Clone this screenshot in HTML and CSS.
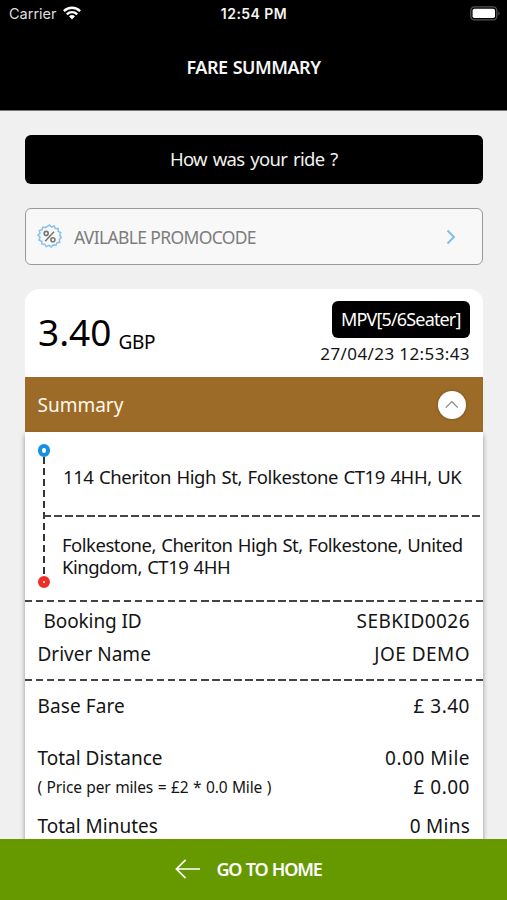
FILE: index.html
```html
<!DOCTYPE html>
<html lang="en">
<head>
<meta charset="utf-8">
<title>Fare Summary</title>
<link rel="stylesheet" href="styles.css">
</head>
<body>
<div class="app">
  <header class="header">
    <div class="status">
      <div class="carrier"><span>Carrier</span>
        <svg width="18" height="14" viewBox="0 0 18 14"><g fill="none" stroke="#fff" stroke-width="2.4"><path d="M.9 5.1a11.6 11.6 0 0 1 16.2 0"/><path d="M3.8 8.3a7.4 7.4 0 0 1 10.4 0"/></g><path d="M6 10.3a4.4 4.4 0 0 1 6 0L9 13.5z" fill="#fff"/></svg>
      </div>
      <span class="time">12:54 PM</span>
      <svg class="battery" width="31" height="15" viewBox="0 0 31 15"><rect x=".8" y=".9" width="26" height="13" rx="3.6" fill="none" stroke="#555" stroke-width="1.3"/><rect x="2.6" y="2.7" width="22.4" height="9.4" rx="1.8" fill="#fff"/><path d="M28.5 5.2q2 2.3 0 4.6z" fill="#666"/></svg>
    </div>
    <h1>FARE SUMMARY</h1>
  </header>
  <main class="content">
    <div class="ride">How was your ride ?</div>
    <div class="promo">
      <svg width="25" height="25" viewBox="0 0 25 25"><path class="seal" d="M12.5 1 14.5 3 17.2 1.9 18.3 4.4 21.2 4.5 21.2 7.3 23.7 8.7 22.6 11.3 24.3 13.5 22.3 15.4 22.7 18.3 20 18.8 18.9 21.5 16.2 20.9 14.1 23.1 12 21.4 9.2 22.6 7.7 20.2 4.9 20.1 4.8 17.2 2.1 16 3 13.3 1 11.2 3 9.3 2.3 6.5 5 5.8 5.9 3.1 8.6 3.6z"/><path class="pct" d="M17 7.8 8.2 17.2"/><circle class="pct" cx="9.2" cy="9.4" r="2"/><circle class="pct" cx="15.9" cy="15.7" r="2"/></svg>
      <span>AVILABLE PROMOCODE</span>
      <svg width="10" height="16" viewBox="0 0 10 16"><path d="m1.5 1.5 6.4 6.5-6.4 6.5" fill="none" stroke="#7fbff0" stroke-width="2"/></svg>
    </div>
    <section class="fare">
      <div class="top">
        <div class="price"><span class="amount">3.40</span><span class="currency">GBP</span></div>
        <div class="meta"><span class="vehicle">MPV[5/6Seater]</span><span class="date">27/04/23 12:53:43</span></div>
      </div>
      <div class="bar"><span>Summary</span>
        <span class="toggle"><svg width="14" height="9" viewBox="0 0 14 9"><path d="m.8 7.6 6-6 6 6" fill="none" stroke="#888" stroke-width="1.3"/></svg></span>
      </div>
      <div class="details">
        <div class="route">
          <div class="track"><i class="dot from"></i><i class="stem"></i><i class="dot to"></i></div>
          <div class="stops">
            <p class="pickup">114 Cheriton High St, Folkestone CT19 4HH, UK</p>
            <p class="drop">Folkestone, Cheriton High St, Folkestone, United<br>Kingdom, CT19 4HH</p>
          </div>
        </div>
        <div class="group booking">
          <div class="row"><span class="bid">Booking ID</span><span class="code">SEBKID0026</span></div>
          <div class="row"><span>Driver Name</span><span class="code">JOE DEMO</span></div>
        </div>
        <div class="group charges">
          <div class="row base"><span class="bf">Base Fare</span><span class="num">£ 3.40</span></div>
          <div class="row"><span>Total Distance</span><span class="num">0.00 Mile</span></div>
          <div class="row rate"><span class="note">( Price per miles = £2 * 0.0 Mile )</span><span class="num">£ 0.00</span></div>
          <div class="row minutes"><span>Total Minutes</span><span class="mins">0 Mins</span></div>
        </div>
      </div>
    </section>
  </main>
  <footer class="home">
    <svg width="26" height="20" viewBox="0 0 26 20"><path d="M10.6.8 1.4 10l9.2 9.2M1.4 10H25" fill="none" stroke="#fff" stroke-width="1.7"/></svg>
    <span>GO TO HOME</span>
  </footer>
</div>
</body>
</html>
```
FILE: styles.css
```css
* { box-sizing: border-box; }
body { margin: 0; background: #f0f0f0; color: #141414; font: 19px/30px "Noto Sans", sans-serif; }
h1, p { margin: 0; font-weight: 400; }
svg { display: block; flex: none; }
.app { height: 900px; display: flex; flex-direction: column; overflow: hidden; white-space: nowrap; }

.header { flex: none; height: 110px; background: #000; color: #f5f5f5; box-shadow: 0 1px 0 #777; }
.status { height: 28px; padding: 0 6px 0 9px; display: grid; grid-template-columns: 1fr auto 1fr; align-items: center; font: 500 14.5px/28px Inter, sans-serif; }
.carrier { display: flex; align-items: center; gap: 6px; font-weight: 400; color: #ddd; }
.carrier svg { margin-top: -3px; }
.time { margin-right: 2px; letter-spacing: .45px; font-weight: 600; font-size: 14px; }
.battery { justify-self: end; margin-top: -2px; }
.header h1 { margin-top: 24px; text-align: center; font-size: 18px; font-weight: 600; letter-spacing: -.5px; word-spacing: 1px; }

.content { flex: 1; min-height: 0; overflow: hidden; padding: 25px 24.5px 0 25px; }
.ride { height: 49px; line-height: 48px; text-align: center; background: #000; color: #f1f1f1; border-radius: 6px; font-size: 18.5px; letter-spacing: -.65px; word-spacing: 1.5px; }
.promo { height: 57px; margin-top: 24px; padding: 0 26px 0 11px; display: flex; align-items: center; border: 1.5px solid #999; border-radius: 6px; background: #f8f8f8; color: #7d7d7d; font-size: 17.5px; letter-spacing: -.65px; }
.promo span { flex: 1; margin-left: 12px; }
.seal { fill: none; stroke: #86c1ef; stroke-width: 1.5; }
.pct { fill: none; stroke: #777; stroke-width: 1.6; }

.fare { margin-top: 24px; }
.top { height: 88px; padding: 12px 12.5px 0 13px; display: flex; justify-content: space-between; background: #fff; border-radius: 14px 14px 0 0; }
.price { display: flex; align-items: flex-start; gap: 7px; color: #000; }
.amount { font-size: 37px; line-height: 62px; }
.currency { margin-top: 26px; letter-spacing: -.3px; }
.meta { display: flex; flex-direction: column; align-items: flex-end; }
.vehicle { height: 37px; padding: 0 9.5px; line-height: 36px; background: #000; color: #fff; border-radius: 6px; font-size: 18px; letter-spacing: -.85px; }
.date { line-height: 32px; font-size: 17px; letter-spacing: .4px; }
.bar { height: 55px; padding: 0 17px 0 12.5px; display: flex; align-items: center; justify-content: space-between; background: #9d6b28; color: #fff8ee; }
.toggle { width: 28px; height: 28px; display: flex; align-items: center; justify-content: center; background: #fff; border-radius: 50%; box-shadow: 0 0 3px rgba(0,0,0,.3); }

.details { background: #fff; height: 460px; box-shadow: 0 3px 5px rgba(0,0,0,.4); }
.route { height: 168px; display: flex; }
.track { flex: none; width: 12.5px; margin: 0 -7px 0 12.5px; padding-top: 12px; display: flex; flex-direction: column; align-items: center; }
.dot { flex: none; width: 12.5px; height: 12.5px; border-radius: 50%; border: 4px solid #1490e4; background: #fff; }
.to { border: 5px solid #ee2f26; }
.stem { width: 2.4px; height: 119px; background: repeating-linear-gradient(#333 0 7px, transparent 7px 11px); }
.stops { flex: 1; display: flex; flex-direction: column; font-size: 18.5px; word-spacing: 1px; }
.pickup { height: 85px; padding: 30px 0 0 20px; background: repeating-linear-gradient(90deg, #444 0 8px, transparent 8px 11px) 0 100% / 100% 2px no-repeat; letter-spacing: -.4px; }
.drop { padding: 17px 0 0 19px; line-height: 22px; letter-spacing: -.5px; }
.group { background: repeating-linear-gradient(90deg, #444 0 7.5px, transparent 7.5px 11px) 0 0 / 100% 2px no-repeat; }
.row { height: 33px; padding: 0 12.5px; display: flex; align-items: center; justify-content: space-between; }
.booking { height: 79px; padding-top: 4px; }
.bid { padding-left: 6px; letter-spacing: -.1px; }
.code { letter-spacing: .45px; }
.num { letter-spacing: .5px; }
.mins { letter-spacing: .25px; }
.charges { padding-top: 10px; }
.bf { letter-spacing: .1px; }
.base { margin-bottom: 19px; }
.rate { height: 26px; }
.note { font-size: 15.5px; letter-spacing: -.15px; word-spacing: .7px; }
.minutes { margin-top: 9px; }

.home { flex: none; height: 61px; display: flex; align-items: center; justify-content: center; gap: 15px; padding: 0 10px 1px 0; background: #669900; color: #fff; font-size: 18px; font-weight: 600; letter-spacing: -1.2px; word-spacing: 1px; }
```
